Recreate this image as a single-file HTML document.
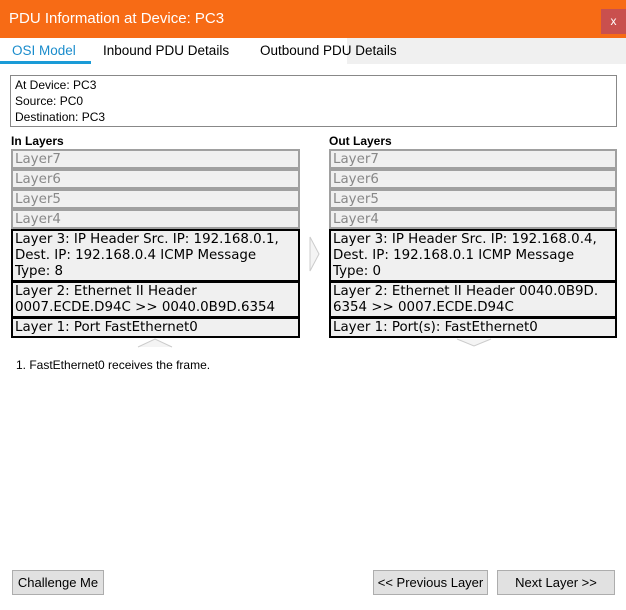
<!DOCTYPE html>
<html><head><style>
body{margin:0;width:626px;height:610px;background:#fff;position:relative;font-family:"Liberation Sans",sans-serif;overflow:hidden}
.a{position:absolute}
.title{left:0;top:0;width:626px;height:38px;background:#f76b15;color:#fff;font-size:15px;line-height:38px}
.x{left:601px;top:9px;width:25px;height:25px;background:#c9504e;color:#fff;font-size:12px;text-align:center;line-height:24px}
.tab{top:38px;height:26px;font-size:13.5px;line-height:26px;color:#000}
.box{border:1px solid #888;font-size:12px;line-height:16px;padding:1px 4px;box-sizing:border-box}
.l{font-family:"DejaVu Sans",sans-serif;font-size:13.4px;background:#f0f0f0;box-sizing:border-box;padding:1px 2px 0;line-height:16px;white-space:nowrap;overflow:hidden}
.g{border:2px solid #a0a0a0;color:#888;padding-top:1px;line-height:15px}
.k{border:2px solid #000;color:#000}
.h{font-size:12px;font-weight:bold;top:134px}
.btn{top:570px;height:25px;background:#e1e1e1;border:1px solid #adadad;box-sizing:border-box;font-size:13px;text-align:center;line-height:23px}
</style></head><body>
<div class="a title"><span style="margin-left:9px">PDU Information at Device: PC3</span></div>
<div class="a x">x</div>
<div class="a" style="left:347px;top:38px;width:279px;height:26px;background:#f0f0f0"></div>
<div class="a tab" style="left:12px;color:#1a8ccc">OSI Model</div>
<div class="a" style="left:0;top:61px;width:91px;height:3px;background:#1a9bd7"></div>
<div class="a tab" style="left:103px">Inbound PDU Details</div>
<div class="a tab" style="left:260px">Outbound PDU Details</div>
<div class="a box" style="left:10px;top:75px;width:607px;height:52px">At Device: PC3<br>Source: PC0<br>Destination: PC3</div>
<div class="a h" style="left:11px">In Layers</div>
<div class="a h" style="left:329px">Out Layers</div>

<div class="a l g" style="left:11px;top:149px;width:289px;height:20px">Layer7</div>
<div class="a l g" style="left:11px;top:169px;width:289px;height:20px">Layer6</div>
<div class="a l g" style="left:11px;top:189px;width:289px;height:20px">Layer5</div>
<div class="a l g" style="left:11px;top:209px;width:289px;height:20px">Layer4</div>
<div class="a l k" style="left:11px;top:229px;width:289px;height:53px">Layer 3: IP Header Src. IP: 192.168.0.1,<br>Dest. IP: 192.168.0.4 ICMP Message<br>Type: 8</div>
<div class="a l k" style="left:11px;top:281px;width:289px;height:37px">Layer 2: Ethernet II Header<br>0007.ECDE.D94C &gt;&gt; 0040.0B9D.6354</div>
<div class="a l k" style="left:11px;top:317px;width:289px;height:21px">Layer 1: Port FastEthernet0</div>

<div class="a l g" style="left:329px;top:149px;width:288px;height:20px">Layer7</div>
<div class="a l g" style="left:329px;top:169px;width:288px;height:20px">Layer6</div>
<div class="a l g" style="left:329px;top:189px;width:288px;height:20px">Layer5</div>
<div class="a l g" style="left:329px;top:209px;width:288px;height:20px">Layer4</div>
<div class="a l k" style="left:329px;top:229px;width:288px;height:53px">Layer 3: IP Header Src. IP: 192.168.0.4,<br>Dest. IP: 192.168.0.1 ICMP Message<br>Type: 0</div>
<div class="a l k" style="left:329px;top:281px;width:288px;height:37px">Layer 2: Ethernet II Header 0040.0B9D.<br>6354 &gt;&gt; 0007.ECDE.D94C</div>
<div class="a l k" style="left:329px;top:317px;width:288px;height:21px">Layer 1: Port(s): FastEthernet0</div>

<svg class="a" style="left:309px;top:236px" width="12" height="36"><path d="M1 1 L10 18 L1 35 Z" fill="#f4f4f4" stroke="#ccc"/></svg>
<svg class="a" style="left:137px;top:338px" width="36" height="10"><path d="M1 9 L18 1 L35 9" fill="#f4f4f4" stroke="#ccc"/></svg>
<svg class="a" style="left:456px;top:338px" width="36" height="10"><path d="M1 1 L18 8 L35 1" fill="#f4f4f4" stroke="#ccc"/></svg>

<div class="a" style="left:16px;top:358px;font-size:12px">1. FastEthernet0 receives the frame.</div>

<div class="a btn" style="left:12px;width:92px">Challenge Me</div>
<div class="a btn" style="left:373px;width:115px">&lt;&lt; Previous Layer</div>
<div class="a btn" style="left:497px;width:118px">Next Layer &gt;&gt;</div>
</body></html>
